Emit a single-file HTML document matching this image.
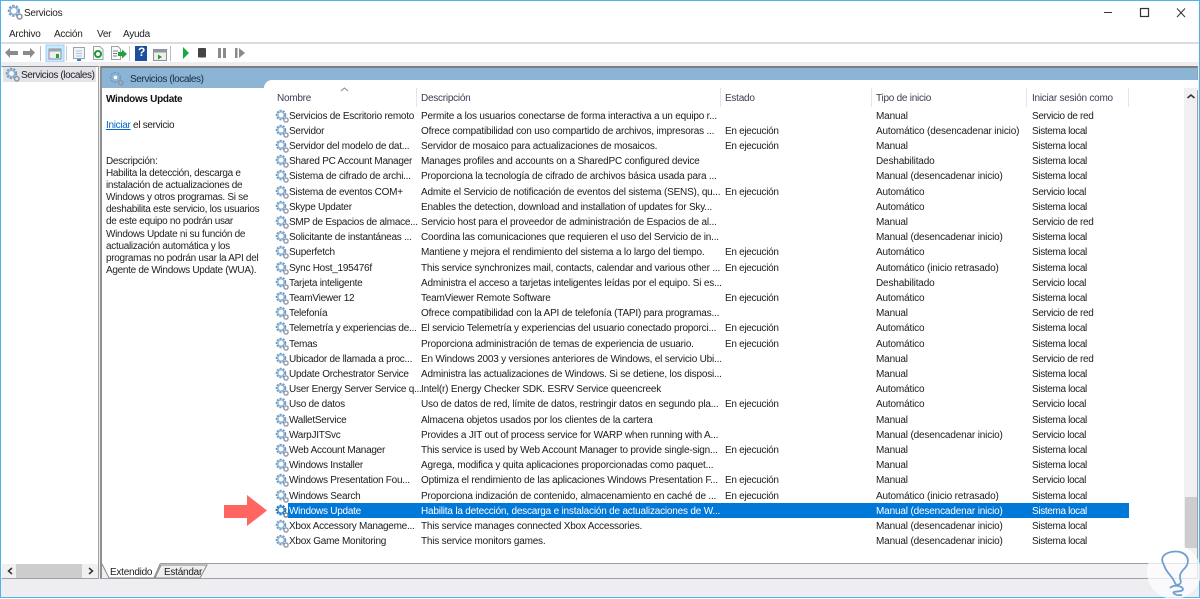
<!DOCTYPE html>
<html lang="es"><head><meta charset="utf-8"><title>Servicios</title>
<style>
*{box-sizing:border-box}
html,body{margin:0;padding:0;background:#fff}
body{width:1200px;height:598px;position:relative;overflow:hidden;font:10px/13px "Liberation Sans",sans-serif;color:#1c1c1c;letter-spacing:-.25px}
.a{position:absolute;white-space:nowrap}
#list{position:absolute;left:272px;top:109.550px;width:860px}
.r{position:relative;height:15.215px;width:860px}
.r span{position:absolute;top:0;white-space:nowrap}
.r svg{position:absolute;left:3px;top:-1px;width:14px;height:14px}
.r span:nth-of-type(1){left:17px;letter-spacing:-.26px}
.r span:nth-of-type(2){left:149px;letter-spacing:-.2px}
.r span:nth-of-type(3){left:453px;letter-spacing:-.3px}
.r span:nth-of-type(4){left:604px;letter-spacing:-.16px}
.r span:nth-of-type(5){left:760px;letter-spacing:-.35px}
.sel::before{content:"";position:absolute;left:16px;right:3px;top:-2px;height:15px;background:#0078d7}
.sel span{color:#fff}
.h{position:absolute;top:92px;color:#3c3c55;white-space:nowrap}
.sep{position:absolute;top:88px;width:1px;height:19px;background:#e3e5ea}
</style></head><body>
<svg width="0" height="0" style="position:absolute"><defs>
<symbol id="g" viewBox="0 0 14 14">
<circle cx="6" cy="6" r="4" fill="none" stroke="#6b9bc8" stroke-width="2.6" stroke-dasharray="1.9 1"/>
<circle cx="6" cy="6" r="3.2" fill="none" stroke="#8fb3d2" stroke-width="1.4"/>
<circle cx="6" cy="6" r="1.7" fill="#fff"/>
<circle cx="11" cy="11" r="2.1" fill="none" stroke="#8d99a8" stroke-width="1.4"/>
</symbol>
<symbol id="gs" viewBox="0 0 14 14">
<circle cx="6" cy="6" r="4" fill="none" stroke="#1f77bd" stroke-width="2.8" stroke-dasharray="1.9 1"/>
<circle cx="6" cy="6" r="3.2" fill="none" stroke="#2f86c8" stroke-width="1.4"/>
<circle cx="6" cy="6" r="1.6" fill="#fff"/>
<circle cx="11" cy="11" r="2.1" fill="none" stroke="#5e7f9e" stroke-width="1.4"/>
</symbol>
</defs></svg>

<!-- title bar -->
<svg class="a" style="left:7px;top:4px" width="16" height="16"><use href="#g"/></svg>
<div class="a" style="left:24px;top:7px;color:#222">Servicios</div>
<svg class="a" style="left:1100px;top:6px" width="90" height="14" fill="none" stroke="#333" stroke-width="1">
<path d="M4 6.5H12"/><rect x="40.5" y="2.5" width="8" height="8" stroke-width="1.2"/><path d="M77 2.5L85 11M85 2.5L77 11"/>
</svg>
<!-- menu -->
<div class="a" style="left:9px;top:28px;color:#222">Archivo</div>
<div class="a" style="left:54px;top:28px;color:#222">Acción</div>
<div class="a" style="left:97px;top:28px;color:#222">Ver</div>
<div class="a" style="left:123px;top:28px;color:#222">Ayuda</div>
<div class="a" style="left:0;top:42px;width:1200px;height:2px;background:#dcdcdf"></div>
<!-- toolbar -->
<svg class="a" style="left:0;top:44px" width="260" height="18">
<path d="M5 8.5L10 4V7H18V11H10V14Z" fill="#8a8a8a"/>
<path d="M35 8.5L30 4V7H23V11H30V14Z" fill="#8a8a8a"/>
<rect x="40" y="2" width="1" height="15" fill="#bbb"/>
<rect x="46" y="1" width="18" height="17" fill="#cce8ff" stroke="#99d1ff"/>
<rect x="49" y="5" width="12" height="10" fill="#eee" stroke="#8a8f96"/><rect x="49" y="5" width="12" height="2.5" fill="#9aa5b0"/><rect x="56" y="10" width="3" height="4" fill="#21a33a"/>
<rect x="66" y="2" width="1" height="15" fill="#ccc"/>
<rect x="73.500" y="3.500" width="11" height="11" fill="#f2f4f7" stroke="#9aa3ad"/><path d="M76 7H82M76 9.500H82M76 12H82" stroke="#a9c3dc"/><rect x="77" y="15" width="4" height="2" fill="#2e86d0"/>
<path d="M93.500 2.500H100L103 5.500V15.500H93.500Z" fill="#fbfbfb" stroke="#9aa3ad"/><circle cx="98" cy="10" r="3" fill="none" stroke="#1d9a36" stroke-width="2"/>
<path d="M111.500 2.500H118L120.500 5V15.500H111.500Z" fill="#fbfbfb" stroke="#9aa3ad"/><path d="M113 7H118M113 9.500H117M113 12H117" stroke="#77808a"/><path d="M118 8H122V5.500L127 10L122 14.500V12H118Z" fill="#21a33a"/>
<rect x="129" y="2" width="1" height="15" fill="#ccc"/>
<rect x="135" y="2" width="12" height="15" fill="#1d4f9c"/>
<rect x="153.500" y="5.500" width="13" height="11" fill="#eee" stroke="#8a8f96"/><rect x="153.500" y="5.500" width="13" height="3" fill="#8f98a2"/><path d="M158 10.500L162 13L158 15.500Z" fill="#1d9a36"/>
<rect x="170" y="2" width="1" height="15" fill="#bbb"/>
<path d="M183 3L189 9L183 15Z" fill="#16ab3e"/>
<rect x="198" y="4" width="8" height="9.500" rx="1" fill="#444"/>
<rect x="218" y="4" width="3" height="10" fill="#8a8a8a"/><rect x="223" y="4" width="3" height="10" fill="#8a8a8a"/>
<rect x="235" y="4" width="2.500" height="10" fill="#8a8a8a"/><path d="M239 4L245 9L239 14Z" fill="#8a8a8a"/>
</svg>
<div class="a" style="left:138px;top:46px;color:#fff;font-weight:bold;font-size:12px">?</div>

<!-- frame background -->
<div class="a" style="left:0;top:62px;width:1200px;height:536px;background:#eeeef2"></div>

<!-- left panel -->
<div class="a" style="left:1px;top:66px;width:98px;height:513px;background:#fff;border:1px solid #a0a0a0;border-top-color:#8a8a8a;border-left:1px solid #fff"></div>
<div class="a" style="left:3px;top:67px;width:93px;height:15px;background:#e4e4e6"></div>
<svg class="a" style="left:5px;top:67px" width="15" height="15"><use href="#g"/></svg>
<div class="a" style="left:21px;top:69px;color:#1c1c2c;letter-spacing:-.4px">Servicios (locales)</div>
<div class="a" style="left:2px;top:564px;width:96px;height:14px;background:#f0f0f0"></div>
<div class="a" style="left:16px;top:564px;width:66px;height:14px;background:#cdcdcd"></div>
<svg class="a" style="left:2px;top:564px" width="96" height="14" fill="none" stroke="#333" stroke-width="1.500"><path d="M10 4L6.500 7L10 10M87 4L90.500 7L87 10"/></svg>

<!-- right panel -->
<div class="a" style="left:100px;top:66px;width:1098px;height:513px;background:#fff;border:1px solid #a0a0a0;border-left:2px solid #8f8f8f;border-top:2px solid #7d7d7d"></div>
<div class="a" style="left:102px;top:68px;width:1095px;height:20px;background:#8cb4d5"></div>
<div class="a" style="left:264px;top:80px;width:934px;height:10px;background:#fff;border-top-left-radius:8px"></div>
<svg class="a" style="left:109px;top:71px" width="15" height="15"><use href="#g"/></svg>
<div class="a" style="left:130px;top:73px;color:#1c2c3c;letter-spacing:-.4px">Servicios (locales)</div>

<!-- description pane -->
<div class="a" style="left:106px;top:93px;font-weight:bold;color:#111;letter-spacing:-.3px">Windows Update</div>
<div class="a" style="left:106px;top:119px;letter-spacing:-.3px"><span style="color:#0066cc;text-decoration:underline">Iniciar</span> el servicio</div>
<div class="a" style="left:106px;top:156px;line-height:12.100px;color:#222;letter-spacing:-.3px">Descripción:<br>Habilita la detección, descarga e<br>instalación de actualizaciones de<br>Windows y otros programas. Si se<br>deshabilita este servicio, los usuarios<br>de este equipo no podrán usar<br>Windows Update ni su función de<br>actualización automática y los<br>programas no podrán usar la API del<br>Agente de Windows Update (WUA).</div>

<!-- headers -->
<div class="h" style="left:277px">Nombre</div>
<div class="h" style="left:421px">Descripción</div>
<div class="h" style="left:725px">Estado</div>
<div class="h" style="left:876px">Tipo de inicio</div>
<div class="h" style="left:1032px">Iniciar sesión como</div>
<svg class="a" style="left:340px;top:87px" width="9" height="5" fill="none" stroke="#888"><path d="M1 4L4.500 1L8 4"/></svg>
<div class="sep" style="left:416px"></div><div class="sep" style="left:720px"></div><div class="sep" style="left:871px"></div><div class="sep" style="left:1026px"></div><div class="sep" style="left:1128px"></div>

<!-- list -->
<div id="list">
<div class="r"><svg><use href="#g"/></svg><span>Servicios de Escritorio remoto</span><span>Permite a los usuarios conectarse de forma interactiva a un equipo r...</span><span></span><span>Manual</span><span>Servicio de red</span></div>
<div class="r"><svg><use href="#g"/></svg><span>Servidor</span><span>Ofrece compatibilidad con uso compartido de archivos, impresoras ...</span><span>En ejecución</span><span>Automático (desencadenar inicio)</span><span>Sistema local</span></div>
<div class="r"><svg><use href="#g"/></svg><span>Servidor del modelo de dat...</span><span>Servidor de mosaico para actualizaciones de mosaicos.</span><span>En ejecución</span><span>Manual</span><span>Sistema local</span></div>
<div class="r"><svg><use href="#g"/></svg><span>Shared PC Account Manager</span><span>Manages profiles and accounts on a SharedPC configured device</span><span></span><span>Deshabilitado</span><span>Sistema local</span></div>
<div class="r"><svg><use href="#g"/></svg><span>Sistema de cifrado de archi...</span><span>Proporciona la tecnología de cifrado de archivos básica usada para ...</span><span></span><span>Manual (desencadenar inicio)</span><span>Sistema local</span></div>
<div class="r"><svg><use href="#g"/></svg><span>Sistema de eventos COM+</span><span>Admite el Servicio de notificación de eventos del sistema (SENS), qu...</span><span>En ejecución</span><span>Automático</span><span>Servicio local</span></div>
<div class="r"><svg><use href="#g"/></svg><span>Skype Updater</span><span>Enables the detection, download and installation of updates for Sky...</span><span></span><span>Automático</span><span>Sistema local</span></div>
<div class="r"><svg><use href="#g"/></svg><span>SMP de Espacios de almace...</span><span>Servicio host para el proveedor de administración de Espacios de al...</span><span></span><span>Manual</span><span>Servicio de red</span></div>
<div class="r"><svg><use href="#g"/></svg><span>Solicitante de instantáneas ...</span><span>Coordina las comunicaciones que requieren el uso del Servicio de in...</span><span></span><span>Manual (desencadenar inicio)</span><span>Sistema local</span></div>
<div class="r"><svg><use href="#g"/></svg><span>Superfetch</span><span>Mantiene y mejora el rendimiento del sistema a lo largo del tiempo.</span><span>En ejecución</span><span>Automático</span><span>Sistema local</span></div>
<div class="r"><svg><use href="#g"/></svg><span>Sync Host_195476f</span><span>This service synchronizes mail, contacts, calendar and various other ...</span><span>En ejecución</span><span>Automático (inicio retrasado)</span><span>Sistema local</span></div>
<div class="r"><svg><use href="#g"/></svg><span>Tarjeta inteligente</span><span>Administra el acceso a tarjetas inteligentes leídas por el equipo. Si es...</span><span></span><span>Deshabilitado</span><span>Servicio local</span></div>
<div class="r"><svg><use href="#g"/></svg><span>TeamViewer 12</span><span>TeamViewer Remote Software</span><span>En ejecución</span><span>Automático</span><span>Sistema local</span></div>
<div class="r"><svg><use href="#g"/></svg><span>Telefonía</span><span>Ofrece compatibilidad con la API de telefonía (TAPI) para programas...</span><span></span><span>Manual</span><span>Servicio de red</span></div>
<div class="r"><svg><use href="#g"/></svg><span>Telemetría y experiencias de...</span><span>El servicio Telemetría y experiencias del usuario conectado proporci...</span><span>En ejecución</span><span>Automático</span><span>Sistema local</span></div>
<div class="r"><svg><use href="#g"/></svg><span>Temas</span><span>Proporciona administración de temas de experiencia de usuario.</span><span>En ejecución</span><span>Automático</span><span>Sistema local</span></div>
<div class="r"><svg><use href="#g"/></svg><span>Ubicador de llamada a proc...</span><span>En Windows 2003 y versiones anteriores de Windows, el servicio Ubi...</span><span></span><span>Manual</span><span>Servicio de red</span></div>
<div class="r"><svg><use href="#g"/></svg><span>Update Orchestrator Service</span><span>Administra las actualizaciones de Windows. Si se detiene, los disposi...</span><span></span><span>Manual</span><span>Sistema local</span></div>
<div class="r"><svg><use href="#g"/></svg><span>User Energy Server Service q...</span><span>Intel(r) Energy Checker SDK. ESRV Service queencreek</span><span></span><span>Automático</span><span>Sistema local</span></div>
<div class="r"><svg><use href="#g"/></svg><span>Uso de datos</span><span>Uso de datos de red, límite de datos, restringir datos en segundo pla...</span><span>En ejecución</span><span>Automático</span><span>Servicio local</span></div>
<div class="r"><svg><use href="#g"/></svg><span>WalletService</span><span>Almacena objetos usados por los clientes de la cartera</span><span></span><span>Manual</span><span>Sistema local</span></div>
<div class="r"><svg><use href="#g"/></svg><span>WarpJITSvc</span><span>Provides a JIT out of process service for WARP when running with A...</span><span></span><span>Manual (desencadenar inicio)</span><span>Servicio local</span></div>
<div class="r"><svg><use href="#g"/></svg><span>Web Account Manager</span><span>This service is used by Web Account Manager to provide single-sign...</span><span>En ejecución</span><span>Manual</span><span>Sistema local</span></div>
<div class="r"><svg><use href="#g"/></svg><span>Windows Installer</span><span>Agrega, modifica y quita aplicaciones proporcionadas como paquet...</span><span></span><span>Manual</span><span>Sistema local</span></div>
<div class="r"><svg><use href="#g"/></svg><span>Windows Presentation Fou...</span><span>Optimiza el rendimiento de las aplicaciones Windows Presentation F...</span><span>En ejecución</span><span>Manual</span><span>Servicio local</span></div>
<div class="r"><svg><use href="#g"/></svg><span>Windows Search</span><span>Proporciona indización de contenido, almacenamiento en caché de ...</span><span>En ejecución</span><span>Automático (inicio retrasado)</span><span>Sistema local</span></div>
<div class="r sel"><svg><use href="#gs"/></svg><span>Windows Update</span><span>Habilita la detección, descarga e instalación de actualizaciones de W...</span><span></span><span>Manual (desencadenar inicio)</span><span>Sistema local</span></div>
<div class="r"><svg><use href="#g"/></svg><span>Xbox Accessory Manageme...</span><span>This service manages connected Xbox Accessories.</span><span></span><span>Manual (desencadenar inicio)</span><span>Sistema local</span></div>
<div class="r"><svg><use href="#g"/></svg><span>Xbox Game Monitoring</span><span>This service monitors games.</span><span></span><span>Manual (desencadenar inicio)</span><span>Sistema local</span></div>
</div>

<!-- arrow -->
<svg class="a" style="left:224px;top:495px" width="44" height="31"><path d="M0 10H23V0L43 15.500L23 31V23H0Z" fill="#ff6661"/></svg>

<!-- vertical scrollbar -->
<div class="a" style="left:1184px;top:88px;width:13px;height:475px;background:#f0f0f0"></div>
<div class="a" style="left:1185px;top:497px;width:12px;height:51px;background:#cdcdcd"></div>
<svg class="a" style="left:1185px;top:92px" width="12" height="8" fill="none" stroke="#333" stroke-width="1.500"><path d="M2.500 6L6 3L9.500 6"/></svg>

<!-- tabs strip -->
<div class="a" style="left:102px;top:563px;width:1095px;height:1px;background:#a0a0a0"></div>
<div class="a" style="left:102px;top:564px;width:1095px;height:14px;background:#f0f0f2"></div>
<svg class="a" style="left:100px;top:563px" width="112" height="17">
<path d="M2 0L9 14H54L60 0Z" fill="#fff"/>
<path d="M2 1L9 15H54L60 1" fill="none" stroke="#8a8a8a"/>
<path d="M61 2L55 15H100L107 2Z" fill="#eeeeef" stroke="#8a8a8a"/>
</svg>
<div class="a" style="left:110px;top:566px">Extendido</div>
<div class="a" style="left:164px;top:566px">Estándar</div>

<!-- window frame -->
<div class="a" style="left:0;top:0;width:1200px;height:598px;border:1px solid #4fb3ea;pointer-events:none"></div>

<!-- watermark -->
<div class="a" style="left:1147px;top:545px;width:54px;height:54px;border-radius:50%;background:rgba(255,255,255,.72)"></div>
<svg class="a" style="left:1150px;top:548px" width="50" height="50" fill="none" stroke="#6f9fd0" stroke-width="1.800">
<path d="M14 17C7 6 22 2 30 4C40 7 40 16 33 22C30 26 29 27 31 34M14 17C16 25 22 27 25 35C26 38 30 37 31 34M20 40C24 36 32 38 33 41C33 44 27 43 24 44C22 45 26 48 32 47"/>
</svg>
</body></html>
